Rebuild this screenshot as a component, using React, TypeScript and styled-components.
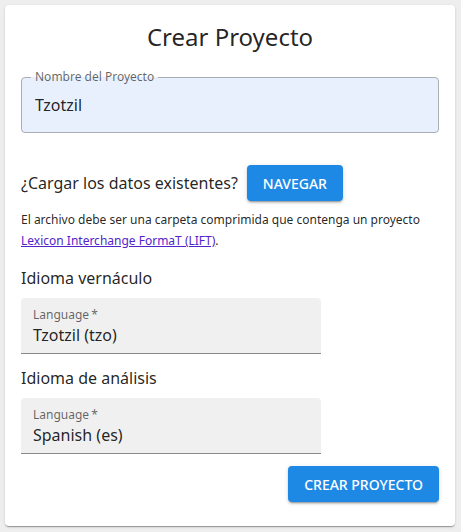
import React from "react";
import styled, { createGlobalStyle } from "styled-components";

const Global = createGlobalStyle`
  html, body { margin: 0; padding: 0; background: #eeeeee; }
  body { font-family: "Noto Sans", "Open Sans", sans-serif; color: rgba(0,0,0,0.87); }
  * { box-sizing: border-box; }
`;

const Page = styled.div`
  padding: 5px;
  width: 461px;
  height: 532px;
`;

const Card = styled.div`
  width: 450px;
  height: 521px;
  background: #fff;
  border-radius: 4px;
  box-shadow: 0 2px 1px -1px rgba(0,0,0,0.2), 0 1px 1px 0 rgba(0,0,0,0.14), 0 1px 3px 0 rgba(0,0,0,0.12);
  padding: 16px;
  display: flex;
  flex-direction: column;
`;

const Title = styled.h1`
  margin: 0;
  font-size: 24px;
  font-weight: 400;
  line-height: 32px;
  text-align: center;
`;

const Outlined = styled.div`
  position: relative;
  margin-top: 24px;
  padding: 0 13px;
  height: 56px;
  border: 1px solid #a9adb5;
  border-radius: 4px;
  background: #e8f0fe;
  display: flex;
  align-items: center;
`;

const FloatLabel = styled.span`
  position: absolute;
  left: 9px;
  top: -7px;
  font-size: 12px;
  line-height: 12px;
  color: rgba(0,0,0,0.6);
  padding: 0 4px;
  background: linear-gradient(to bottom, #fff 0 50%, #e8f0fe 50% 100%);
`;

const Value = styled.div`
  font-size: 16px;
  line-height: 24px;
  color: rgba(0,0,0,0.87);
`;

const LoadRow = styled.div`
  display: flex;
  align-items: center;
  gap: 9px;
  margin-top: 32px;
`;

const Question = styled.span`
  font-size: 16px;
  line-height: 24px;
`;

const Button = styled.button`
  border: none;
  border-radius: 4px;
  background: #1e88e5;
  color: #fff;
  font-family: inherit;
  font-size: 14px;
  font-weight: 500;
  height: 36px;
  padding: 0 16px;
  text-transform: uppercase;
  box-shadow: 0 3px 1px -2px rgba(0,0,0,0.2), 0 2px 2px 0 rgba(0,0,0,0.14), 0 1px 5px 0 rgba(0,0,0,0.12);
  letter-spacing: 0;
`;

const Help = styled.p`
  margin: 8px 0 0;
  font-size: 12px;
  line-height: 21px;
  color: rgba(0,0,0,0.87);
`;

const Link = styled.a`
  color: #5224c9;
  text-decoration: underline;
`;

const Subtitle = styled.h2<{ $gap: number }>`
  margin: ${(p) => p.$gap}px 0 0;
  font-size: 16px;
  font-weight: 400;
  line-height: 24px;
`;

const Filled = styled.div`
  margin-top: 8px;
  width: 300px;
  height: 56px;
  background: #f0f0f0;
  border-radius: 4px 4px 0 0;
  border-bottom: 1px solid #8a8a8a;
  padding: 8px 12px 0;
  display: flex;
  flex-direction: column;
`;

const FilledLabel = styled.div`
  font-size: 12px;
  line-height: 16px;
  color: rgba(0,0,0,0.6);
  margin-top: 1px;
`;

const Actions = styled.div`
  display: flex;
  justify-content: flex-end;
  margin-top: 12px;
`;

export default function App() {
  return (
    <>
      <Global />
      <Page>
        <Card>
          <Title>Crear Proyecto</Title>
          <Outlined>
            <FloatLabel>Nombre del Proyecto</FloatLabel>
            <Value>Tzotzil</Value>
          </Outlined>
          <LoadRow>
            <Question>¿Cargar los datos existentes?</Question>
            <Button>Navegar</Button>
          </LoadRow>
          <Help>
            El archivo debe ser una carpeta comprimida que contenga un proyecto{" "}
            <Link href="#">Lexicon Interchange FormaT (LIFT)</Link>.
          </Help>
          <Subtitle $gap={15}>Idioma vernáculo</Subtitle>
          <Filled>
            <FilledLabel>Language{"\u2009"}*</FilledLabel>
            <Value>Tzotzil (tzo)</Value>
          </Filled>
          <Subtitle $gap={12}>Idioma de análisis</Subtitle>
          <Filled>
            <FilledLabel>Language{"\u2009"}*</FilledLabel>
            <Value>Spanish (es)</Value>
          </Filled>
          <Actions>
            <Button>Crear Proyecto</Button>
          </Actions>
        </Card>
      </Page>
    </>
  );
}
